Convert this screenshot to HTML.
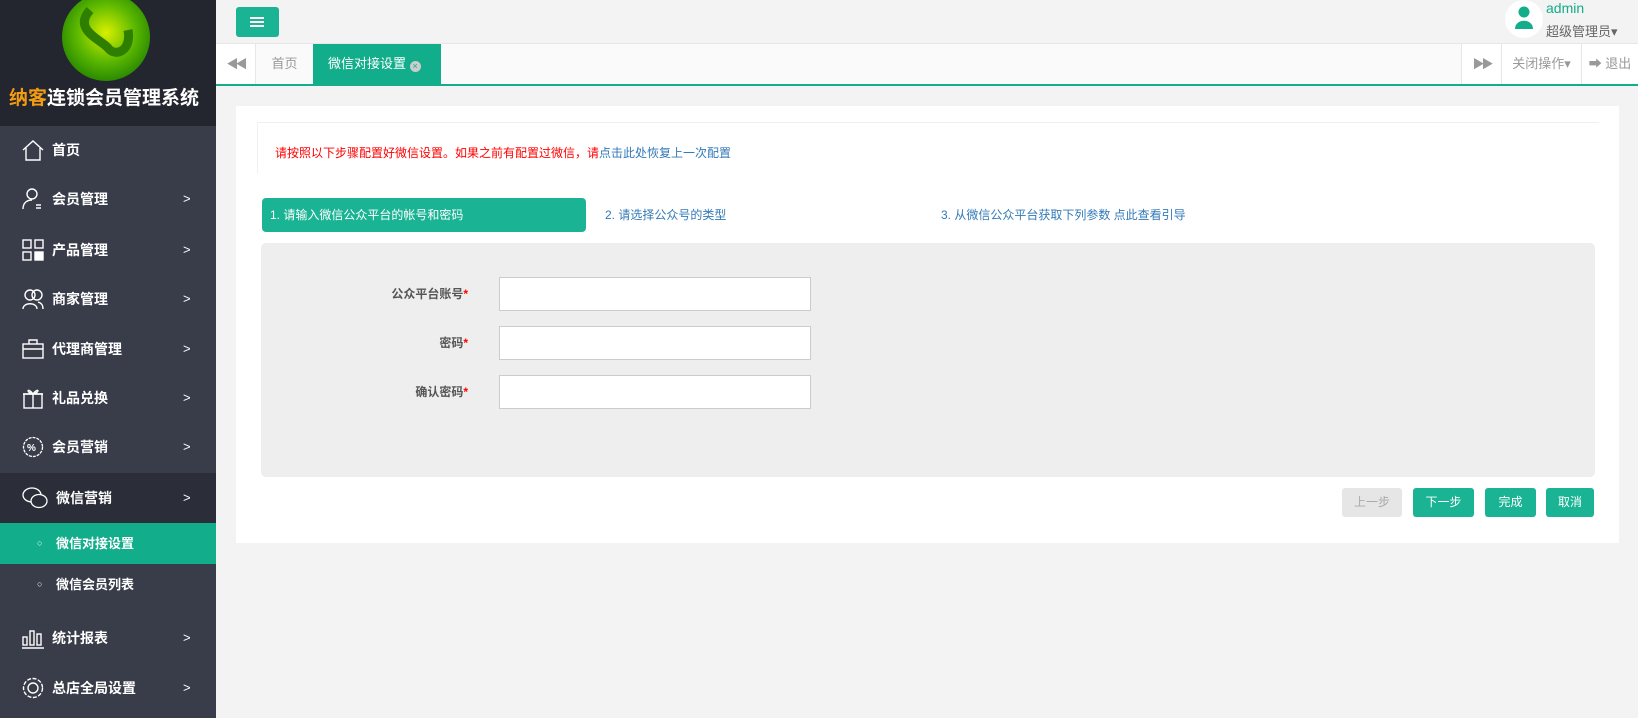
<!DOCTYPE html>
<html><head><meta charset="utf-8"><style>
*{margin:0;padding:0;box-sizing:border-box}
body{width:1638px;height:718px;background:#f3f3f4;font-family:"Liberation Sans","Noto Sans CJK SC",sans-serif;font-size:13px;position:relative;overflow:hidden}
.abs{position:absolute}
#side{left:0;top:0;width:216px;height:718px;background:#393d4a}
#logo{left:0;top:0;width:216px;height:126px;background:#23252f}
.mi{position:absolute;left:0;width:216px;height:50px;color:#fff;font-weight:bold;font-size:14px;line-height:50px}
.mi svg{position:absolute;left:22px;top:14px}
.mi .t{position:absolute;left:52px}
.mi .ar{position:absolute;left:183px;font-weight:normal;font-size:13px}
.sub{position:absolute;left:0;width:216px;height:41px;line-height:41px;color:#fff;font-weight:bold;font-size:13px}
.sub .d{position:absolute;left:37px;font-size:9px;font-weight:normal}
.sub .t{position:absolute;left:56px}
.lbl{position:absolute;right:1170px;color:#555;font-weight:bold;font-size:12px;text-align:right}
.inp{position:absolute;left:499px;width:312px;height:34px;background:#fff;border:1px solid #ccc}
.btn{position:absolute;top:488px;height:29px;line-height:29px;color:#fff;font-size:12px;text-align:center;border-radius:3px;background:#1ab394}
</style></head><body>
<div id="side" class="abs"></div>
<div id="logo" class="abs">
 <svg class="abs" style="left:62px;top:0" width="88" height="82" viewBox="0 0 88 82"><defs><radialGradient id="g" cx="50%" cy="45%" r="55%"><stop offset="0" stop-color="#d8f000"/><stop offset="0.6" stop-color="#5cb800"/><stop offset="1" stop-color="#2a8a00"/></radialGradient></defs><circle cx="44" cy="37" r="44" fill="url(#g)"/><path d="M28 10 C10 30 40 40 46 48 C54 58 70 50 66 30" fill="none" stroke="#2e7f00" stroke-width="9"/></svg>
 <div class="abs" style="left:9px;top:83px;font-size:19px;font-weight:bold;color:#fff;white-space:nowrap"><span style="color:#f39c12">纳客</span>连锁会员管理系统</div>
</div>
<div class="mi" style="top:125px"><svg width="22" height="22" viewBox="0 0 22 22" fill="none" stroke="#fff" stroke-width="1.4"><path d="M1 11 L11 2 L21 11 M4 9 V21 H18 V9"/></svg><span class="t">首页</span></div>
<div class="mi" style="top:174px"><svg width="22" height="22" viewBox="0 0 22 22" fill="none" stroke="#fff" stroke-width="1.4"><circle cx="10" cy="6" r="5"/><path d="M1 21 C1 14 6 12 10 12 M14 17h5 M14 20h5"/></svg><span class="t">会员管理</span><span class="ar">&gt;</span></div>
<div class="mi" style="top:225px"><svg width="22" height="22" viewBox="0 0 22 22" fill="none" stroke="#fff" stroke-width="1.4"><rect x="1" y="1" width="8" height="8"/><rect x="13" y="1" width="8" height="8"/><rect x="1" y="13" width="8" height="8"/><rect x="13" y="13" width="8" height="8" fill="#fff"/></svg><span class="t">产品管理</span><span class="ar">&gt;</span></div>
<div class="mi" style="top:274px"><svg width="22" height="22" viewBox="0 0 22 22" fill="none" stroke="#fff" stroke-width="1.4"><circle cx="8" cy="7" r="5"/><circle cx="15" cy="7" r="5"/><path d="M1 21 C1 14 15 14 15 21 M16 14 C20 15 21 18 21 21"/></svg><span class="t">商家管理</span><span class="ar">&gt;</span></div>
<div class="mi" style="top:324px"><svg width="22" height="22" viewBox="0 0 22 22" fill="none" stroke="#fff" stroke-width="1.4"><rect x="1" y="6" width="20" height="14"/><path d="M7 6V2h8v4 M1 11h20"/></svg><span class="t">代理商管理</span><span class="ar">&gt;</span></div>
<div class="mi" style="top:373px"><svg width="22" height="22" viewBox="0 0 22 22" fill="none" stroke="#fff" stroke-width="1.4"><rect x="2" y="7" width="18" height="14"/><path d="M1 7h20 M11 7v14 M11 7 C6 0 3 5 11 7 C16 0 19 5 11 7"/></svg><span class="t">礼品兑换</span><span class="ar">&gt;</span></div>
<div class="mi" style="top:422px"><svg width="22" height="22" viewBox="0 0 22 22" fill="none" stroke="#fff" stroke-width="1.3"><circle cx="11" cy="11" r="9.5" stroke-dasharray="3 1"/><text x="5" y="15" font-size="10" fill="#fff" stroke="none">%</text></svg><span class="t">会员营销</span><span class="ar">&gt;</span></div>
<div class="mi" style="top:473px;background:#2b2e38"><svg width="26" height="22" viewBox="0 0 26 22" fill="none" stroke="#fff" stroke-width="1.3"><ellipse cx="10" cy="8" rx="9" ry="7"/><ellipse cx="17" cy="14" rx="8" ry="6.5" fill="#2b2e38"/></svg><span class="t" style="left:56px">微信营销</span><span class="ar">&gt;</span></div>
<div class="sub" style="top:523px;background:#12ad8a"><span class="d">○</span><span class="t">微信对接设置</span></div>
<div class="sub" style="top:564px"><span class="d">○</span><span class="t">微信会员列表</span></div>
<div class="mi" style="top:613px"><svg width="22" height="22" viewBox="0 0 22 22" fill="none" stroke="#fff" stroke-width="1.4"><rect x="1" y="10" width="4" height="8"/><rect x="8" y="4" width="4" height="14"/><rect x="15" y="7" width="4" height="11"/><path d="M0 21h22"/></svg><span class="t">统计报表</span><span class="ar">&gt;</span></div>
<div class="mi" style="top:663px"><svg width="22" height="22" viewBox="0 0 22 22" fill="none" stroke="#fff" stroke-width="1.4"><circle cx="11" cy="11" r="9.5" stroke-dasharray="4 1.5"/><circle cx="11" cy="11" r="5"/></svg><span class="t">总店全局设置</span><span class="ar">&gt;</span></div>

<!-- top bar -->
<div class="abs" style="left:236px;top:7px;width:43px;height:30px;background:#1ab394;border-radius:3px"><div class="abs" style="left:14px;top:10px;width:14px;height:2px;background:#fff;box-shadow:0 4px 0 #fff,0 8px 0 #fff"></div></div>
<div class="abs" style="left:1505px;top:0;width:38px;height:38px;border-radius:50%;background:#fff"><svg class="abs" style="left:9px;top:6px" width="20" height="24" viewBox="0 0 20 24"><circle cx="10" cy="6" r="5.5" fill="#12ad8a"/><path d="M1 23 C1 12 19 12 19 23Z" fill="#12ad8a"/></svg></div>
<div class="abs" style="left:1546px;top:0;color:#12ad8a;font-size:14px">admin</div>
<div class="abs" style="left:1546px;top:21px;color:#666;font-size:13px">超级管理员▾</div>

<div class="abs" style="left:216px;top:43px;width:1422px;height:41px;background:#fafafa;border-top:1px solid #e7e7e7"></div>
<div class="abs" style="left:216px;top:84px;width:1422px;height:2px;background:#12ad8a"></div>
<div class="abs" style="left:216px;top:44px;width:40px;height:40px;background:#fff;border-right:1px solid #e7e7e7;color:#999;text-align:center;line-height:40px;font-size:12px;letter-spacing:-3px">◀◀</div>
<div class="abs" style="left:256px;top:44px;width:57px;height:40px;line-height:40px;text-align:center;color:#999">首页</div>
<div class="abs" style="left:313px;top:44px;width:128px;height:40px;line-height:40px;background:#12ad8a;color:#fff;padding-left:15px">微信对接设置 <span style="display:inline-block;width:11px;height:11px;border-radius:50%;background:#ccc;color:#12ad8a;font-size:9px;line-height:11px;text-align:center;vertical-align:-1px">×</span></div>
<div class="abs" style="left:1461px;top:44px;width:40px;height:40px;background:#fff;border-left:1px solid #e7e7e7;color:#999;text-align:center;line-height:40px;font-size:12px;letter-spacing:-3px">▶▶</div>
<div class="abs" style="left:1501px;top:44px;width:80px;height:40px;background:#fff;border-left:1px solid #e7e7e7;color:#999;text-align:center;line-height:40px">关闭操作▾</div>
<div class="abs" style="left:1581px;top:44px;width:57px;height:40px;background:#fff;border-left:1px solid #e7e7e7;color:#999;text-align:center;line-height:40px">➡ 退出</div>

<!-- content -->
<div class="abs" style="left:236px;top:106px;width:1383px;height:437px;background:#fff"></div>
<div class="abs" style="left:257px;top:122px;width:1342px;height:52px;border:1px solid #f0f0f0;border-bottom:none;border-right:none;padding:21px 0 0 17px;font-size:12px;color:#f00">请按照以下步骤配置好微信设置。如果之前有配置过微信，请<span style="color:#337ab7">点击此处恢复上一次配置</span></div>
<div class="abs" style="left:262px;top:198px;width:324px;height:34px;background:#1ab394;border-radius:4px;color:#fff;font-size:12px;line-height:34px;padding-left:8px">1. 请输入微信公众平台的帐号和密码</div>
<div class="abs" style="left:605px;top:198px;line-height:34px;font-size:12px;color:#337ab7">2. 请选择公众号的类型</div>
<div class="abs" style="left:941px;top:198px;line-height:34px;font-size:12px;color:#337ab7">3. 从微信公众平台获取下列参数 点此查看引导</div>
<div class="abs" style="left:261px;top:243px;width:1334px;height:234px;background:#eee;border-radius:5px"></div>
<div class="lbl" style="top:285px">公众平台账号<span style="color:#f00">*</span></div>
<div class="lbl" style="top:334px">密码<span style="color:#f00">*</span></div>
<div class="lbl" style="top:383px">确认密码<span style="color:#f00">*</span></div>
<div class="inp" style="top:277px"></div>
<div class="inp" style="top:326px"></div>
<div class="inp" style="top:375px"></div>
<div class="btn" style="left:1342px;width:60px;background:#e6e6e6;color:#aaa">上一步</div>
<div class="btn" style="left:1413px;width:61px">下一步</div>
<div class="btn" style="left:1485px;width:51px">完成</div>
<div class="btn" style="left:1546px;width:48px">取消</div>
</body></html>
